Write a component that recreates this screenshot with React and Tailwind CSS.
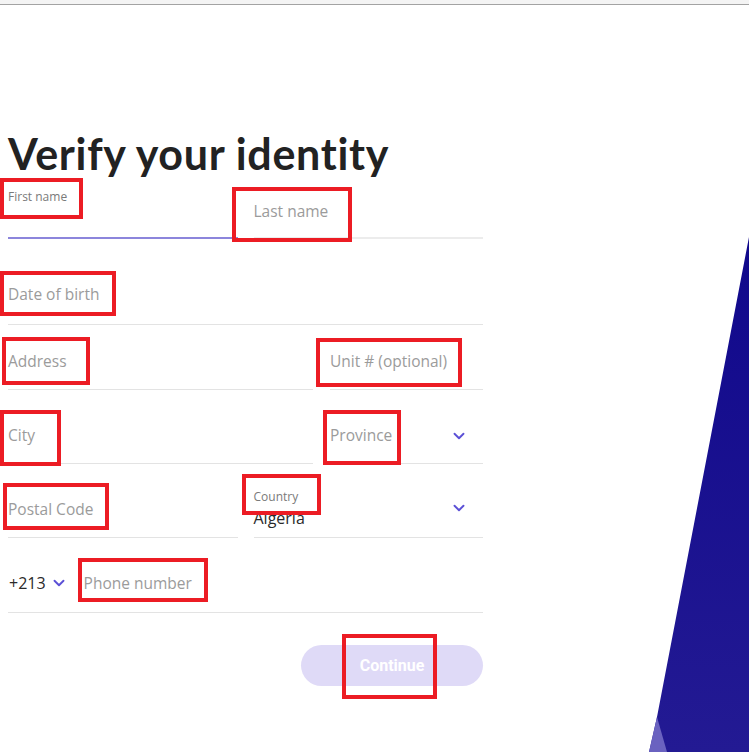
import React from 'react';
import { ChevronDown } from 'lucide-react';

const field = "font-['Open_Sans',sans-serif]";

function Chevron() {
  return <ChevronDown size={18} strokeWidth={2.5} className="text-[#5b50d6] shrink-0" />;
}

function Placeholder({ text, className = '', right = null, pb = 'pb-[15px]' }) {
  return (
    <div className={`h-[56px] border-b border-[#e3e3e3] flex items-end justify-between ${pb} ${className}`}>
      <span className="text-[15.5px] leading-[24px] text-[#9b9b9b]">{text}</span>
      {right}
    </div>
  );
}

// red annotation frames drawn over the form
const marks = [
  { left: 0, top: 178, w: 83, h: 41 },
  { left: 232, top: 187, w: 120, h: 55 },
  { left: 0, top: 271, w: 116, h: 45 },
  { left: 2, top: 337, w: 88, h: 48 },
  { left: 316, top: 338, w: 146, h: 49 },
  { left: 0, top: 410, w: 61, h: 56 },
  { left: 323, top: 410, w: 78, h: 55 },
  { left: 3, top: 483, w: 106, h: 47 },
  { left: 242, top: 474, w: 79, h: 41 },
  { left: 78, top: 558, w: 130, h: 44 },
  { left: 342, top: 634, w: 95, h: 65 },
];

export default function App() {
  return (
    <div className="relative w-full h-[752px] overflow-hidden bg-white">
      <div className="h-[5px] bg-[#f4f4f4] border-b border-[#a3a3a3]" />

      {/* decorative shape on the right */}
      <svg className="absolute right-0 bottom-0" width="120" height="520" viewBox="629 232 120 520">
        <defs>
          <linearGradient id="blu" x1="0" y1="0" x2="0" y2="1">
            <stop offset="0" stopColor="#10088c" />
            <stop offset="1" stopColor="#231a93" />
          </linearGradient>
        </defs>
        <polygon points="749,237 657,717 649,752 749,752" fill="url(#blu)" />
        <polygon points="657,717 649,752 667,752" fill="#6a62c0" />
      </svg>

      <div className="pl-2 w-[483px]">
        <h1 className="mt-[125px] h-[48px] text-[43px] leading-[48px] font-bold text-[#222] font-['Lato',sans-serif] tracking-[0.7px]">
          Verify your identity
        </h1>

        <div className={`${field} mt-[5px] grid grid-cols-2 gap-x-4`}>
          <div className="h-[56px] border-b-2 border-[#8c85dc] flex flex-col justify-end pb-[6px]">
            <span className="text-[12px] leading-[16px] text-[#7a7a7a]">First name</span>
            <span className="h-[24px] mt-[2px]" />
          </div>
          <Placeholder text="Last name" className="border-b-2 border-[#ececec]" pb="pb-[14px]" />
        </div>

        <div className={`${field} mt-[30px]`}>
          <Placeholder text="Date of birth" pb="pb-[18px]" />
        </div>

        <div className={`${field} mt-[9px] grid grid-cols-[305px_1fr] gap-x-[17px]`}>
          <Placeholder text="Address" pb="pb-[16px]" />
          <Placeholder text="Unit # (optional)" pb="pb-[16px]" />
        </div>

        <div className={`${field} mt-[18px] grid grid-cols-[305px_1fr] gap-x-[17px]`}>
          <Placeholder text="City" pb="pb-[16px]" />
          <Placeholder text="Province" className="pr-[15px]" pb="pb-[16px]" right={<span className="mb-[2px]"><Chevron /></span>} />
        </div>

        <div className={`${field} mt-[18px] grid grid-cols-2 gap-x-4`}>
          <Placeholder text="Postal Code" pb="pb-[16px]" />
          <div className="h-[56px] border-b border-[#e3e3e3] flex items-end justify-between pb-[7px] pr-[15px]">
            <div className="flex flex-col">
              <span className="text-[12px] leading-[16px] text-[#7a7a7a]">Country</span>
              <span className="text-[16px] leading-[24px] text-[#2a2a2a] mt-[1px]">Algeria</span>
            </div>
            <div className="mb-[13px]"><Chevron /></div>
          </div>
        </div>

        <div className={`${field} mt-[19px] h-[56px] border-b border-[#e3e3e3] flex items-end pb-[17px]`}>
          <span className="text-[16px] leading-[24px] text-[#2a2a2a] pl-px">+213</span>
          <span className="ml-[4px] mb-[3px]"><Chevron /></span>
          <span className="ml-[16px] text-[15.5px] leading-[24px] text-[#9b9b9b]">Phone number</span>
        </div>

        <div className="mt-[32px] flex justify-end">
          <button className="w-[182px] h-[41px] rounded-full bg-[#dfdaf7] text-white font-bold text-[16px] font-['Roboto',sans-serif]">
            Continue
          </button>
        </div>
      </div>

      {marks.map((m, i) => (
        <div
          key={i}
          className="absolute border-4 border-[#ec1c24] pointer-events-none"
          style={{ left: m.left, top: m.top, width: m.w, height: m.h }}
        />
      ))}
    </div>
  );
}
